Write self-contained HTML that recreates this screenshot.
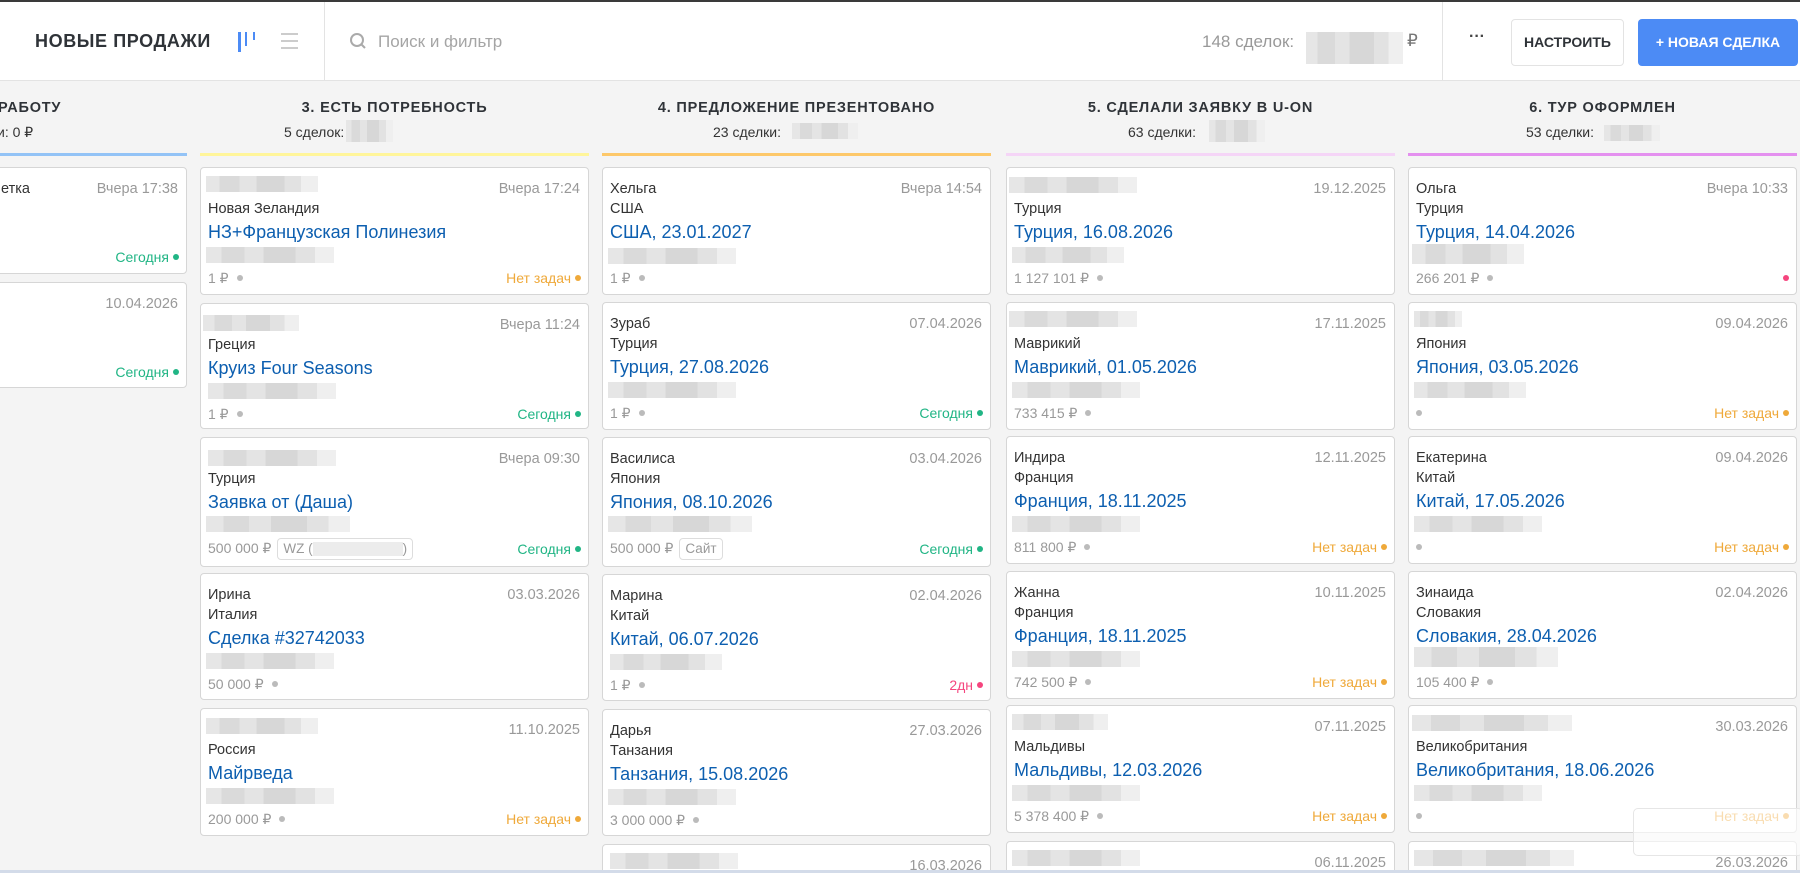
<!DOCTYPE html>
<html><head><meta charset="utf-8">
<style>
*{box-sizing:border-box;margin:0;padding:0}
html,body{width:1800px;height:873px;overflow:hidden}
body{background:#f4f4f4;font-family:"Liberation Sans","Noto Sans CJK SC",sans-serif;color:#333}
#wrap{position:relative;width:1800px;height:873px;overflow:hidden}
.hdr{position:absolute;left:0;top:0;width:1800px;height:81px;background:#fff;border-top:2px solid #3a3a3a;border-bottom:1px solid #e3e3e3;z-index:2}
.a{position:absolute;white-space:nowrap}
.col{position:absolute;top:0;width:389px;height:870px;overflow:hidden}
.ct{position:absolute;top:100px;left:0;width:100%;text-align:center;font-weight:bold;font-size:14.5px;letter-spacing:0.8px;color:#2f3338}
.ln{position:absolute;top:153px;left:0;width:100%;height:3px}
.card{position:absolute;left:0;width:389px;height:128px;background:#fff;border:1px solid #d6d6d6;border-radius:4px;overflow:hidden}
.r1{position:absolute;top:12px;left:7px;font-size:14.5px;line-height:18px;color:#333}
.dt{position:absolute;top:12px;right:8px;font-size:14.5px;line-height:18px;color:#999}
.r2{position:absolute;top:32px;left:7px;font-size:14.5px;line-height:18px;color:#333}
.tt{position:absolute;top:53px;left:7px;font-size:18px;line-height:22px;color:#0d5fb0}
.bl{position:absolute;height:16px;background:linear-gradient(90deg,#e6e6e6 0 12%,#dadada 12% 30%,#e4e4e4 30% 45%,#d7d7d7 45% 70%,#e2e2e2 70% 85%,#efefef 85%)}
.bt{position:absolute;top:101px;left:7px;font-size:14px;line-height:18px;color:#999}
.dot{display:inline-block;width:6px;height:6px;border-radius:50%;background:#bbb;margin-left:8px;vertical-align:middle;position:relative;top:-1px}
.st{position:absolute;top:101px;right:7px;font-size:14px;line-height:18px}
.st .dot{margin-left:4px}
.g{color:#21b585}.g .dot{background:#21b585}
.o{color:#efa93a}.o .dot{background:#efa93a}
.p{color:#f5457e}.p .dot{background:#f5457e}
.tag{display:inline-block;border:1px solid #ddd;border-radius:4px;padding:0 5px;margin-left:6px;line-height:20px;color:#999;font-size:13.5px}
</style></head><body><div id="wrap">

<div class="hdr">
  <div class="a" style="left:35px;top:29px;font-size:18px;font-weight:bold;letter-spacing:0.6px;color:#2f3338">НОВЫЕ ПРОДАЖИ</div>
  <div class="a" style="left:238px;top:30px;width:3px;height:20px;background:#4c8bf5"></div>
  <div class="a" style="left:245px;top:30px;width:2px;height:14px;background:#4c8bf5"></div>
  <div class="a" style="left:253px;top:30px;width:2px;height:8px;background:#4c8bf5"></div>
  <div class="a" style="left:281px;top:31px;width:17px;height:2px;background:#ccc"></div>
  <div class="a" style="left:281px;top:38px;width:17px;height:2px;background:#ccc"></div>
  <div class="a" style="left:281px;top:45px;width:17px;height:2px;background:#ccc"></div>
  <div class="a" style="left:324px;top:0;width:1px;height:79px;background:#e3e3e3"></div>
  <svg class="a" style="left:349px;top:30px" width="20" height="20" viewBox="0 0 20 20"><circle cx="8" cy="8" r="6" fill="none" stroke="#aaa" stroke-width="2"/><path d="M12.5 12.5L16 16" stroke="#aaa" stroke-width="2"/></svg>
  <div class="a" style="left:378px;top:30px;font-size:17px;color:#a5a5a5">Поиск и фильтр</div>
  <div class="a" style="left:1202px;top:30px;font-size:17px;color:#999">148 сделок:</div>
  <div class="bl" style="left:1306px;top:30px;width:97px;height:32px"></div>
  <div class="a" style="left:1407px;top:29px;font-size:17px;color:#777">₽</div>
  <div class="a" style="left:1442px;top:0;width:1px;height:79px;background:#e3e3e3"></div>
  <div class="a" style="left:1469px;top:26px;font-size:16px;font-weight:bold;color:#444">···</div>
  <div class="a" style="left:1511px;top:17px;width:113px;height:47px;border:1px solid #e3e3e3;border-radius:4px;text-align:center;line-height:45px;font-weight:bold;font-size:14px;color:#2f3338">НАСТРОИТЬ</div>
  <div class="a" style="left:1638px;top:17px;width:160px;height:47px;background:#4c8bf5;border-radius:4px;text-align:center;line-height:47px;font-weight:bold;font-size:14px;color:#fff">+ НОВАЯ СДЕЛКА</div>
</div>

<div class="col" style="left:-202px">
  <div class="a" style="left:200px;top:100px;font-weight:bold;font-size:14.5px;letter-spacing:0.8px;color:#2f3338">РАБОТУ</div>
  <div class="a" style="left:199px;top:124px;font-size:14px">и: 0 ₽</div>
  <div class="ln" style="background:#93c3f6"></div>
  <div class="card" style="top:167px;height:107px">
    <div class="r1" style="left:202px">етка</div><div class="dt">Вчера 17:38</div>
    <div class="st g" style="top:80px">Сегодня<span class="dot"></span></div>
  </div>
  <div class="card" style="top:282px;height:106px">
    <div class="dt">10.04.2026</div>
    <div class="st g" style="top:80px">Сегодня<span class="dot"></span></div>
  </div>
</div>

<div class="col" style="left:200px">
  <div class="ct">3. ЕСТЬ ПОТРЕБНОСТЬ</div>
  <div class="a" style="left:84px;top:124px;font-size:14px">5 сделок:</div><div class="bl" style="left:146px;top:120px;width:47px;height:22px"></div>
  <div class="ln" style="background:#fff59a"></div>
  <div class="card" style="top:167px"><div class="bl" style="left:5px;top:8px;width:112px;height:16px"></div><div class="dt">Вчера 17:24</div><div class="r2">Новая Зеландия</div><div class="tt">НЗ+Французская Полинезия</div><div class="bl" style="left:5px;top:79px;width:128px"></div><div class="bt">1 ₽<span class="dot"></span></div><div class="st o">Нет задач<span class="dot"></span></div></div>
  <div class="card" style="top:303px;height:126px"><div class="bl" style="left:2px;top:11px;width:96px;height:16px"></div><div class="dt">Вчера 11:24</div><div class="r2">Греция</div><div class="tt">Круиз Four Seasons</div><div class="bl" style="left:7px;top:79px;width:128px"></div><div class="bt">1 ₽<span class="dot"></span></div><div class="st g">Сегодня<span class="dot"></span></div></div>
  <div class="card" style="top:437px;height:130px"><div class="bl" style="left:7px;top:12px;width:128px;height:16px"></div><div class="dt">Вчера 09:30</div><div class="r2">Турция</div><div class="tt">Заявка от (Даша)</div><div class="bl" style="left:5px;top:78px;width:144px"></div><div class="bt" style="top:100px">500 000 ₽<span class="tag">WZ (<span style="display:inline-block;width:90px;height:14px;background:#ececec;vertical-align:middle"></span>)</span></div><div class="st g" style="top:102px">Сегодня<span class="dot"></span></div></div>
  <div class="card" style="top:573px;height:127px"><div class="r1">Ирина</div><div class="dt">03.03.2026</div><div class="r2">Италия</div><div class="tt">Сделка #32742033</div><div class="bl" style="left:5px;top:79px;width:128px"></div><div class="bt">50 000 ₽<span class="dot"></span></div></div>
  <div class="card" style="top:708px"><div class="bl" style="left:5px;top:9px;width:112px;height:16px"></div><div class="dt">11.10.2025</div><div class="r2">Россия</div><div class="tt">Майрведа</div><div class="bl" style="left:5px;top:79px;width:128px"></div><div class="bt">200 000 ₽<span class="dot"></span></div><div class="st o">Нет задач<span class="dot"></span></div></div>
</div>

<div class="col" style="left:602px">
  <div class="ct">4. ПРЕДЛОЖЕНИЕ ПРЕЗЕНТОВАНО</div>
  <div class="a" style="left:111px;top:124px;font-size:14px">23 сделки:</div><div class="bl" style="left:190px;top:123px;width:66px;height:16px"></div>
  <div class="ln" style="background:#fdc86a"></div>
  <div class="card" style="top:167px"><div class="r1">Хельга</div><div class="dt">Вчера 14:54</div><div class="r2">США</div><div class="tt">США, 23.01.2027</div><div class="bl" style="left:5px;top:80px;width:128px"></div><div class="bt">1 ₽<span class="dot"></span></div></div>
  <div class="card" style="top:302px"><div class="r1">Зураб</div><div class="dt">07.04.2026</div><div class="r2">Турция</div><div class="tt">Турция, 27.08.2026</div><div class="bl" style="left:5px;top:79px;width:128px"></div><div class="bt">1 ₽<span class="dot"></span></div><div class="st g">Сегодня<span class="dot"></span></div></div>
  <div class="card" style="top:437px;height:130px"><div class="r1">Василиса</div><div class="dt">03.04.2026</div><div class="r2">Япония</div><div class="tt">Япония, 08.10.2026</div><div class="bl" style="left:5px;top:78px;width:144px"></div><div class="bt" style="top:100px">500 000 ₽<span class="tag">Сайт</span></div><div class="st g" style="top:102px">Сегодня<span class="dot"></span></div></div>
  <div class="card" style="top:574px;height:127px"><div class="r1">Марина</div><div class="dt">02.04.2026</div><div class="r2">Китай</div><div class="tt">Китай, 06.07.2026</div><div class="bl" style="left:7px;top:79px;width:112px"></div><div class="bt">1 ₽<span class="dot"></span></div><div class="st p">2дн<span class="dot"></span></div></div>
  <div class="card" style="top:709px;height:127px"><div class="r1">Дарья</div><div class="dt">27.03.2026</div><div class="r2">Танзания</div><div class="tt">Танзания, 15.08.2026</div><div class="bl" style="left:5px;top:79px;width:128px"></div><div class="bt">3 000 000 ₽<span class="dot"></span></div></div>
  <div class="card" style="top:844px"><div class="bl" style="left:7px;top:8px;width:128px;height:16px"></div><div class="dt">16.03.2026</div></div>
</div>

<div class="col" style="left:1006px">
  <div class="ct">5. СДЕЛАЛИ ЗАЯВКУ В U-ON</div>
  <div class="a" style="left:122px;top:124px;font-size:14px">63 сделки:</div><div class="bl" style="left:203px;top:120px;width:56px;height:22px"></div>
  <div class="ln" style="background:#f5d5f7"></div>
  <div class="card" style="top:167px"><div class="bl" style="left:2px;top:9px;width:128px;height:16px"></div><div class="dt">19.12.2025</div><div class="r2">Турция</div><div class="tt">Турция, 16.08.2026</div><div class="bl" style="left:5px;top:79px;width:112px"></div><div class="bt">1 127 101 ₽<span class="dot"></span></div></div>
  <div class="card" style="top:302px"><div class="bl" style="left:2px;top:8px;width:128px;height:16px"></div><div class="dt">17.11.2025</div><div class="r2">Маврикий</div><div class="tt">Маврикий, 01.05.2026</div><div class="bl" style="left:5px;top:79px;width:128px"></div><div class="bt">733 415 ₽<span class="dot"></span></div></div>
  <div class="card" style="top:436px"><div class="r1">Индира</div><div class="dt">12.11.2025</div><div class="r2">Франция</div><div class="tt">Франция, 18.11.2025</div><div class="bl" style="left:5px;top:79px;width:128px"></div><div class="bt">811 800 ₽<span class="dot"></span></div><div class="st o">Нет задач<span class="dot"></span></div></div>
  <div class="card" style="top:571px"><div class="r1">Жанна</div><div class="dt">10.11.2025</div><div class="r2">Франция</div><div class="tt">Франция, 18.11.2025</div><div class="bl" style="left:5px;top:79px;width:128px"></div><div class="bt">742 500 ₽<span class="dot"></span></div><div class="st o">Нет задач<span class="dot"></span></div></div>
  <div class="card" style="top:705px"><div class="bl" style="left:5px;top:8px;width:96px;height:16px"></div><div class="dt">07.11.2025</div><div class="r2">Мальдивы</div><div class="tt">Мальдивы, 12.03.2026</div><div class="bl" style="left:5px;top:79px;width:128px"></div><div class="bt">5 378 400 ₽<span class="dot"></span></div><div class="st o">Нет задач<span class="dot"></span></div></div>
  <div class="card" style="top:841px"><div class="bl" style="left:5px;top:8px;width:128px;height:16px"></div><div class="dt">06.11.2025</div></div>
</div>

<div class="col" style="left:1408px">
  <div class="ct">6. ТУР ОФОРМЛЕН</div>
  <div class="a" style="left:118px;top:124px;font-size:14px">53 сделки:</div><div class="bl" style="left:196px;top:125px;width:56px;height:16px"></div>
  <div class="ln" style="background:#e490ef"></div>
  <div class="card" style="top:167px"><div class="r1">Ольга</div><div class="dt">Вчера 10:33</div><div class="r2">Турция</div><div class="tt">Турция, 14.04.2026</div><div class="bl" style="left:3px;top:76px;width:112px;height:20px"></div><div class="bt">266 201 ₽<span class="dot"></span></div><div class="st p"><span class="dot"></span></div></div>
  <div class="card" style="top:302px"><div class="bl" style="left:5px;top:8px;width:48px;height:16px"></div><div class="dt">09.04.2026</div><div class="r2">Япония</div><div class="tt">Япония, 03.05.2026</div><div class="bl" style="left:5px;top:79px;width:112px"></div><div class="bt"><span class="dot" style="margin-left:0"></span></div><div class="st o">Нет задач<span class="dot"></span></div></div>
  <div class="card" style="top:436px"><div class="r1">Екатерина</div><div class="dt">09.04.2026</div><div class="r2">Китай</div><div class="tt">Китай, 17.05.2026</div><div class="bl" style="left:5px;top:79px;width:128px"></div><div class="bt"><span class="dot" style="margin-left:0"></span></div><div class="st o">Нет задач<span class="dot"></span></div></div>
  <div class="card" style="top:571px"><div class="r1">Зинаида</div><div class="dt">02.04.2026</div><div class="r2">Словакия</div><div class="tt">Словакия, 28.04.2026</div><div class="bl" style="left:5px;top:75px;width:144px;height:20px"></div><div class="bt">105 400 ₽<span class="dot"></span></div></div>
  <div class="card" style="top:705px"><div class="bl" style="left:3px;top:9px;width:160px;height:16px"></div><div class="dt">30.03.2026</div><div class="r2">Великобритания</div><div class="tt">Великобритания, 18.06.2026</div><div class="bl" style="left:5px;top:79px;width:128px"></div><div class="bt"><span class="dot" style="margin-left:0"></span></div><div class="st o">Нет задач<span class="dot"></span></div></div>
  <div class="card" style="top:841px"><div class="bl" style="left:5px;top:8px;width:160px;height:16px"></div><div class="dt">26.03.2026</div></div>
</div>

<div class="a" style="left:1633px;top:808px;width:170px;height:48px;background:rgba(255,255,255,0.6);border:1px solid #e6e6e6;border-radius:5px"></div>
<div class="a" style="left:0;top:870px;width:1800px;height:3px;background:#d3dbe9"></div>
</div></body></html>
